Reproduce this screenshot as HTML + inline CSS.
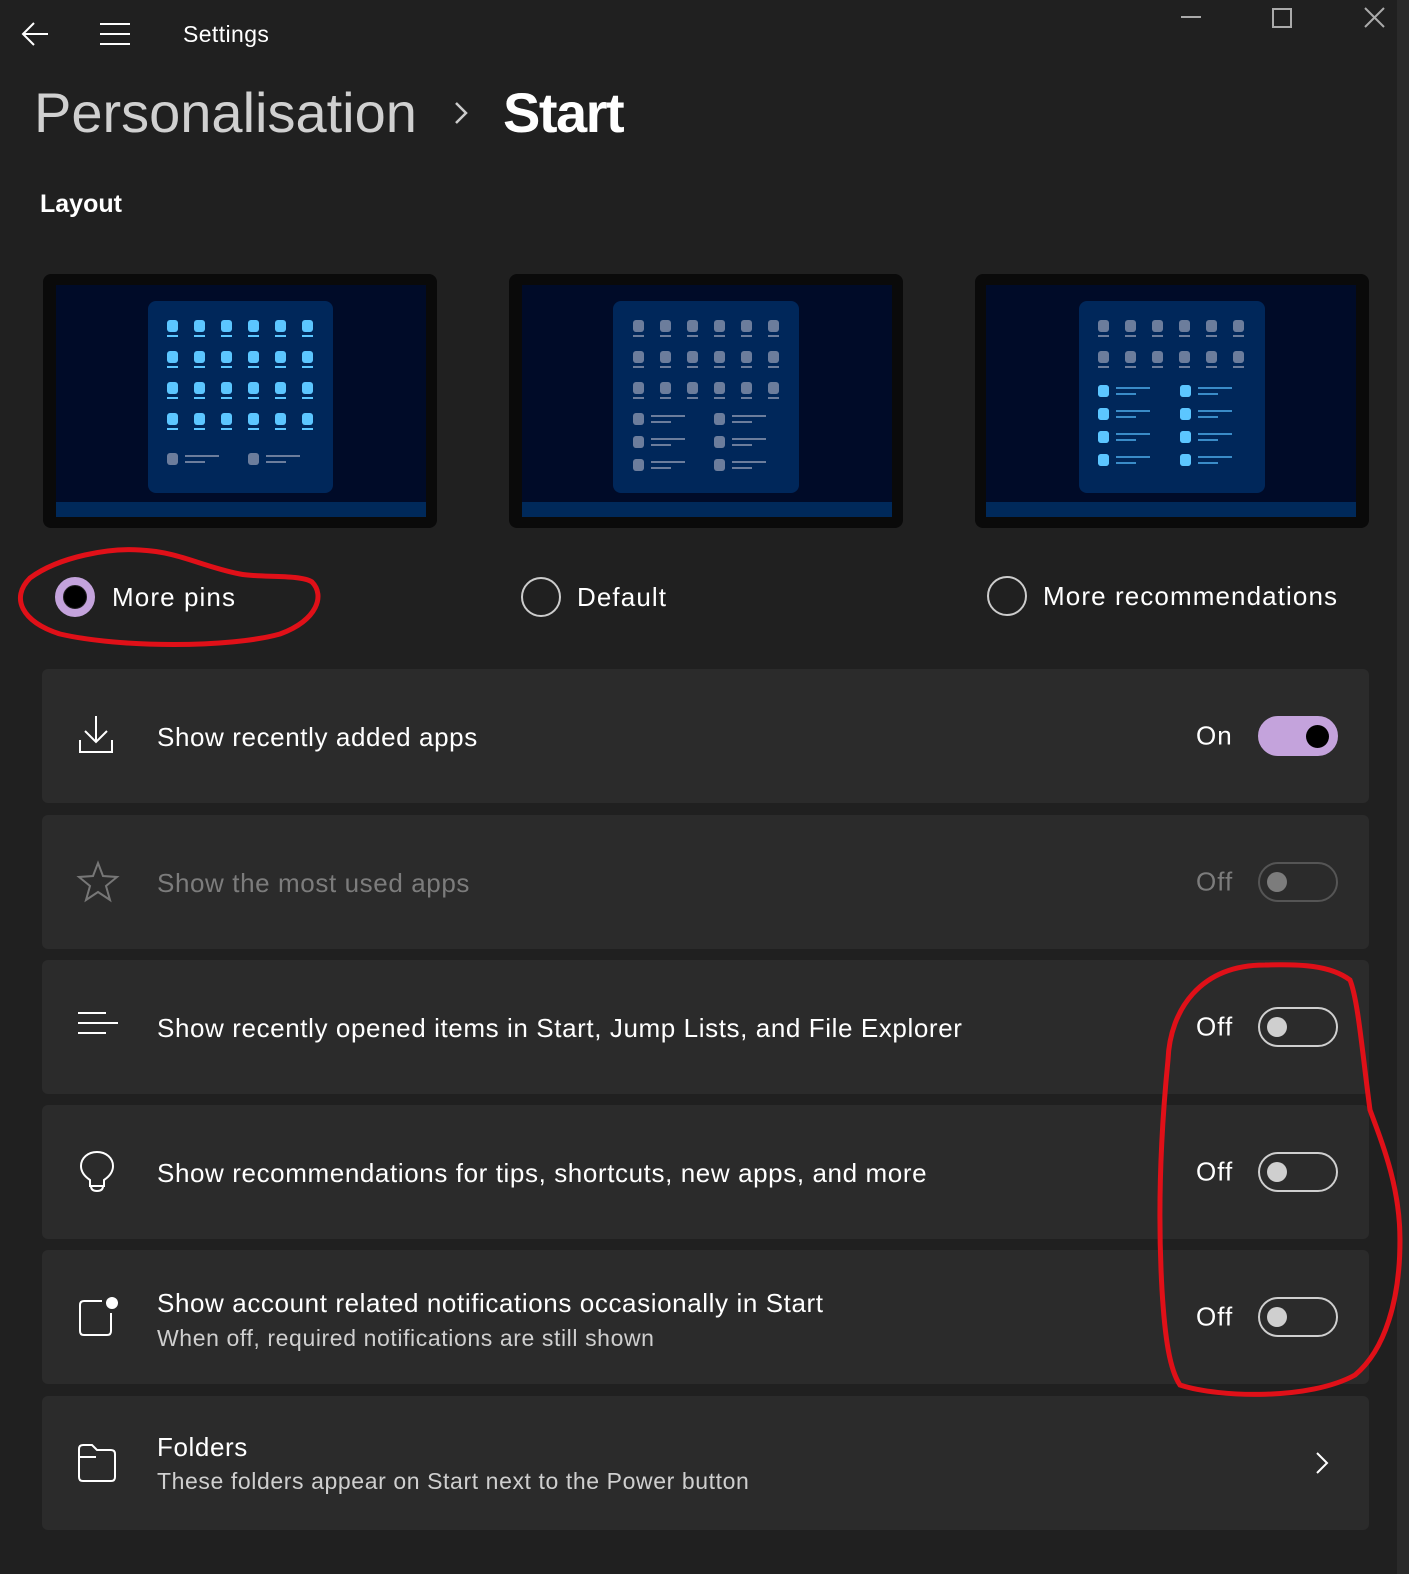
<!DOCTYPE html>
<html style="overflow:hidden;width:1409px;height:1574px"><head><meta charset="utf-8"><style>
*{margin:0;padding:0;box-sizing:border-box}
body{width:1409px;height:1574px;background:#202020;font-family:"Liberation Sans",sans-serif;color:#fff;position:relative;overflow:hidden}
.a{position:absolute;white-space:nowrap}
.card{position:absolute;left:42px;width:1327px;height:134px;background:#2b2b2b;border-radius:6px}
.t{position:absolute;left:115px;font-size:26px;color:#fff;letter-spacing:0.6px;white-space:nowrap}
.s{position:absolute;left:115px;font-size:23px;color:#cfcfcf;letter-spacing:0.6px;white-space:nowrap}
.lbl{position:absolute;left:1154px;font-size:26px;top:50%;transform:translateY(-50%);letter-spacing:1px}
.tg{position:absolute;left:1216px;width:80px;height:40px;border-radius:20px;top:47px;border:2px solid #cfcfcf}
.tg i{position:absolute;left:7px;top:8px;width:20px;height:20px;border-radius:50%;background:#cfcfcf}
.ic{position:absolute;left:34px;top:45px}
.r{font-size:26px;letter-spacing:1.1px}
</style></head><body>
<div class="a" style="left:1397px;top:0;width:12px;height:1574px;background:#2a2a2a"></div>
<svg class="a" style="left:0;top:0" width="1409" height="60">
<g stroke="#fff" stroke-width="2" fill="none">
<path d="M48 34H23M34 23L23 34L34 45"/>
<path d="M100 24H130M100 34H130M100 44H130"/>
<path d="M1181 17H1201" stroke="#aaa"/>
<rect x="1273" y="9" width="18" height="18" stroke="#aaa"/>
<path d="M1365 8L1384 27M1384 8L1365 27" stroke="#aaa"/>
</g></svg>
<div class="a" style="left:183px;top:21px;font-size:23px;letter-spacing:0.4px">Settings</div>
<div class="a" style="left:34px;top:80px;font-size:56px;color:#d0d0d0">Personalisation</div>
<svg class="a" style="left:452px;top:100px" width="20" height="28"><path d="M4 3L14 13L4 23" stroke="#ccc" stroke-width="2.5" fill="none"/></svg>
<div class="a" style="left:503px;top:80px;font-size:56px;font-weight:bold;letter-spacing:-1.5px">Start</div>
<div class="a" style="left:40px;top:190px;font-size:25px;font-weight:bold">Layout</div>

<svg class="a" style="left:0;top:270px" width="1409" height="270">
<defs>
<g id="ic"><rect width="11" height="12" rx="3"/><rect y="15" width="11" height="2"/></g>
<g id="li"><rect width="11" height="12" rx="3"/><rect x="18" y="2" width="34" height="2"/><rect x="18" y="8" width="20" height="2"/></g>
<g id="row6"><use href="#ic" x="0"/><use href="#ic" x="27"/><use href="#ic" x="54"/><use href="#ic" x="81"/><use href="#ic" x="108"/><use href="#ic" x="135"/></g>
</defs>
<g transform="translate(43,4)"><rect width="394" height="254" rx="8" fill="#0a0a0a"/><rect x="13" y="11" width="370" height="232" fill="#000b28"/><rect x="13" y="228" width="370" height="15" fill="#00295a"/>
<rect x="105" y="27" width="185" height="192" rx="8" fill="#00275a"/>
<g fill="#5cc6ff"><use href="#row6" x="124" y="46"/><use href="#row6" x="124" y="77"/><use href="#row6" x="124" y="108"/><use href="#row6" x="124" y="139"/></g>
<g fill="#6c7d9c"><use href="#li" x="124" y="179"/><use href="#li" x="205" y="179"/></g></g>
<g transform="translate(509,4)"><rect width="394" height="254" rx="8" fill="#0a0a0a"/><rect x="13" y="11" width="370" height="232" fill="#000b28"/><rect x="13" y="228" width="370" height="15" fill="#00295a"/>
<rect x="104" y="27" width="186" height="192" rx="8" fill="#00275a"/>
<g fill="#6c7d9c"><use href="#row6" x="124" y="46"/><use href="#row6" x="124" y="77"/><use href="#row6" x="124" y="108"/>
<use href="#li" x="124" y="139"/><use href="#li" x="205" y="139"/><use href="#li" x="124" y="162"/><use href="#li" x="205" y="162"/><use href="#li" x="124" y="185"/><use href="#li" x="205" y="185"/></g></g>
<g transform="translate(975,4)"><rect width="394" height="254" rx="8" fill="#0a0a0a"/><rect x="11" y="11" width="370" height="232" fill="#000b28"/><rect x="11" y="228" width="370" height="15" fill="#00295a"/>
<rect x="104" y="27" width="186" height="192" rx="8" fill="#00275a"/>
<g fill="#6c7d9c"><use href="#row6" x="123" y="46"/><use href="#row6" x="123" y="77"/></g>
<g fill="#3a8cc8"><use href="#li" x="123" y="111"/><use href="#li" x="205" y="111"/><use href="#li" x="123" y="134"/><use href="#li" x="205" y="134"/><use href="#li" x="123" y="157"/><use href="#li" x="205" y="157"/><use href="#li" x="123" y="180"/><use href="#li" x="205" y="180"/></g>
<g fill="#5cc6ff"><rect x="123" y="111" width="11" height="12" rx="3"/><rect x="205" y="111" width="11" height="12" rx="3"/><rect x="123" y="134" width="11" height="12" rx="3"/><rect x="205" y="134" width="11" height="12" rx="3"/><rect x="123" y="157" width="11" height="12" rx="3"/><rect x="205" y="157" width="11" height="12" rx="3"/><rect x="123" y="180" width="11" height="12" rx="3"/><rect x="205" y="180" width="11" height="12" rx="3"/></g></g>
</svg>

<svg class="a" style="left:0;top:570px" width="1409" height="60">
<circle cx="75" cy="27" r="16" fill="none" stroke="#c4a3dc" stroke-width="8"/><circle cx="75" cy="27" r="11" fill="#000"/>
<circle cx="541" cy="27" r="19" fill="none" stroke="#ccc" stroke-width="2"/>
<circle cx="1007" cy="26" r="19" fill="none" stroke="#ccc" stroke-width="2"/>
</svg>
<div class="a r" style="left:112px;top:582px">More pins</div>
<div class="a r" style="left:577px;top:582px">Default</div>
<div class="a r" style="left:1043px;top:581px">More recommendations</div>

<div class="card" style="top:669px">
<svg class="ic" width="40" height="44"><g stroke="#fff" stroke-width="2" fill="none"><path d="M20 2V28M9 17L20 28L31 17M4 26V38H36V26"/></g></svg>
<div class="t" style="top:53px">Show recently added apps</div>
<div class="lbl">On</div>
<div class="tg" style="background:#c4a3dc;border-color:#c4a3dc"><i style="left:46px;top:7px;width:23px;height:23px;background:#000"></i></div>
</div>
<div class="card" style="top:815px">
<svg class="ic" width="44" height="44"><path d="M22 3L27 16L41 17L30 26L34 40L22 32L10 40L14 26L3 17L17 16Z" stroke="#777" stroke-width="2" fill="none"/></svg>
<div class="t" style="top:53px;color:#7c7c7c">Show the most used apps</div>
<div class="lbl" style="color:#7c7c7c">Off</div>
<div class="tg" style="border-color:#555"><i style="background:#7c7c7c"></i></div>
</div>
<div class="card" style="top:960px">
<svg class="ic" width="44" height="44"><g stroke="#fff" stroke-width="2"><path d="M2 8H30M2 18H42M2 28H30"/></g></svg>
<div class="t" style="top:53px">Show recently opened items in Start, Jump Lists, and File Explorer</div>
<div class="lbl">Off</div><div class="tg"><i></i></div>
</div>
<div class="card" style="top:1105px">
<svg class="ic" width="44" height="46"><g stroke="#fff" stroke-width="2" fill="none"><path d="M14 30C8 26 5 21 5 16C5 8 12 2 21 2C30 2 37 8 37 16C37 21 34 26 28 30V36H14Z"/><path d="M15 36Q15 41 21 41Q27 41 27 36"/></g></svg>
<div class="t" style="top:53px">Show recommendations for tips, shortcuts, new apps, and more</div>
<div class="lbl">Off</div><div class="tg"><i></i></div>
</div>
<div class="card" style="top:1250px">
<svg class="ic" width="46" height="46"><g stroke="#fff" stroke-width="2" fill="none"><path d="M26 6H8Q4 6 4 10V36Q4 40 8 40H31Q35 40 35 36V18"/></g><circle cx="36" cy="8" r="6" fill="#fff"/></svg>
<div class="t" style="top:38px">Show account related notifications occasionally in Start</div>
<div class="s" style="top:75px">When off, required notifications are still shown</div>
<div class="lbl">Off</div><div class="tg"><i></i></div>
</div>
<div class="card" style="top:1396px">
<svg class="ic" width="46" height="46"><path d="M3 8Q3 4 7 4H16L21 9H35Q39 9 39 13V36Q39 40 35 40H7Q3 40 3 36Z M3 16H20" stroke="#fff" stroke-width="2" fill="none"/></svg>
<div class="t" style="top:36px">Folders</div>
<div class="s" style="top:72px">These folders appear on Start next to the Power button</div>
<svg class="a" style="left:1270px;top:54px" width="20" height="28"><path d="M5 3L15 13L5 23" stroke="#fff" stroke-width="2" fill="none"/></svg>
</div>

<svg class="a" style="left:0;top:0;pointer-events:none" width="1409" height="1574">
<g stroke="#e01018" stroke-width="5" fill="none" stroke-linecap="round">
<path d="M140 550C110 548 60 556 30 578C10 598 22 622 60 634C120 648 230 648 280 634C318 620 325 595 312 582C300 574 260 578 240 574C200 566 180 552 140 550Z"/>
<path d="M1265 965C1200 965 1170 1010 1168 1060C1160 1140 1158 1220 1162 1290C1165 1340 1170 1370 1180 1385C1220 1398 1310 1400 1355 1375C1385 1350 1400 1300 1400 1240C1400 1190 1385 1150 1370 1110C1362 1050 1358 1000 1350 980C1330 965 1300 964 1265 965Z"/>
</g></svg>
</body></html>
